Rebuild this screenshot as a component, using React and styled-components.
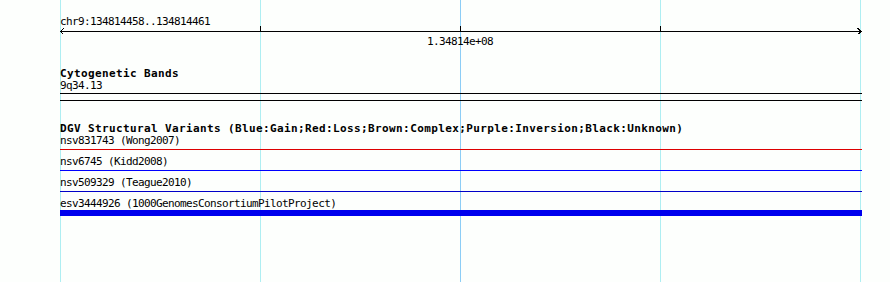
import React from "react";
import styled, { createGlobalStyle } from "styled-components";

const GlobalStyle = createGlobalStyle`
  html, body {
    margin: 0;
    padding: 0;
    background: #fdfffd;
  }
`;

const gridLines = [
  { x: 60, color: "#aeeef2" },
  { x: 260, color: "#aeeef2" },
  { x: 460, color: "#8ccdf6" },
  { x: 660, color: "#aeeef2" },
  { x: 860, color: "#aeeef2" },
];

const tracks = [
  { id: "nsv831743", source: "Wong2007", color: "#dd0000", thick: false },
  { id: "nsv6745", source: "Kidd2008", color: "#0000ff", thick: false },
  { id: "nsv509329", source: "Teague2010", color: "#0000c8", thick: false },
  {
    id: "esv3444926",
    source: "1000GenomesConsortiumPilotProject",
    color: "#0000ee",
    thick: true,
  },
];

function App() {
  return (
    <>
      <GlobalStyle />
      <Canvas>
        <GridLayer>
          {gridLines.map((line) => (
            <GridLine
              key={line.x}
              $color={line.color}
              style={{ left: line.x }}
            />
          ))}
        </GridLayer>

        <Panel>
          <Locus>chr9:134814458..134814461</Locus>
          <Ruler width="802" height="10" shapeRendering="crispEdges">
            <line x1="0" y1="7.5" x2="802" y2="7.5" stroke="#000" />
            <polyline
              points="4,4 0.5,7.5 4,11"
              fill="none"
              stroke="#000"
            />
            <polyline
              points="797.5,4 801,7.5 797.5,11"
              fill="none"
              stroke="#000"
            />
            {[200.5, 400.5, 600.5].map((x) => (
              <line key={x} x1={x} y1="2" x2={x} y2="8" stroke="#000" />
            ))}
          </Ruler>
          <RulerLabel>1.34814e+08</RulerLabel>

          <TrackTitle $gap={20}>Cytogenetic Bands</TrackTitle>
          <FeatureLabel>9q34.13</FeatureLabel>
          <BandBox />

          <TrackTitle $gap={22}>
            DGV Structural Variants
            (Blue:Gain;Red:Loss;Brown:Complex;Purple:Inversion;Black:Unknown)
          </TrackTitle>
          {tracks.map((t) => (
            <FeatureRow key={t.id}>
              <FeatureLabel>
                {t.id} ({t.source})
              </FeatureLabel>
              <Glyph $color={t.color} $thick={t.thick} />
            </FeatureRow>
          ))}
        </Panel>
      </Canvas>
    </>
  );
}

const Canvas = styled.div`
  position: relative;
  width: 890px;
  height: 282px;
  overflow: hidden;
  background: #fdfffd;
`;

const GridLayer = styled.div`
  position: absolute;
  inset: 0;
  pointer-events: none;
`;

const GridLine = styled.div`
  position: absolute;
  top: 0;
  bottom: 0;
  width: 1px;
  background: ${(p) => p.$color};
`;

const Panel = styled.div`
  position: relative;
  display: flex;
  flex-direction: column;
  width: 802px;
  margin-left: 60px;
  padding-top: 16px;
  font-family: "DejaVu Sans Mono", "Liberation Mono", monospace;
  font-size: 11px;
  line-height: 12px;
  color: #000;
`;

const Locus = styled.div`
  height: 12px;
  letter-spacing: -0.62px;
  margin-bottom: -4px;
  white-space: nowrap;
`;

const Ruler = styled.svg`
  display: block;
`;

const RulerLabel = styled.div`
  height: 12px;
  margin-top: 2px;
  width: 800px;
  text-align: center;
  letter-spacing: -0.62px;
`;

const TrackTitle = styled.div`
  height: 12px;
  margin-top: ${(p) => p.$gap}px;
  font-weight: bold;
  letter-spacing: 0.38px;
  white-space: nowrap;
`;

const FeatureLabel = styled.div`
  height: 12px;
  letter-spacing: -0.62px;
  white-space: nowrap;
`;

const BandBox = styled.div`
  height: 6px;
  margin-top: 1px;
  border-top: 1px solid #000;
  border-bottom: 1px solid #000;
`;

const FeatureRow = styled.div`
  display: flex;
  flex-direction: column;
  padding-bottom: 3px;
`;

const Glyph = styled.div`
  height: ${(p) => (p.$thick ? 6 : 1)}px;
  margin: ${(p) => (p.$thick ? "0" : "2px 0 3px")};
  background: ${(p) => p.$color};
`;

export default App;
